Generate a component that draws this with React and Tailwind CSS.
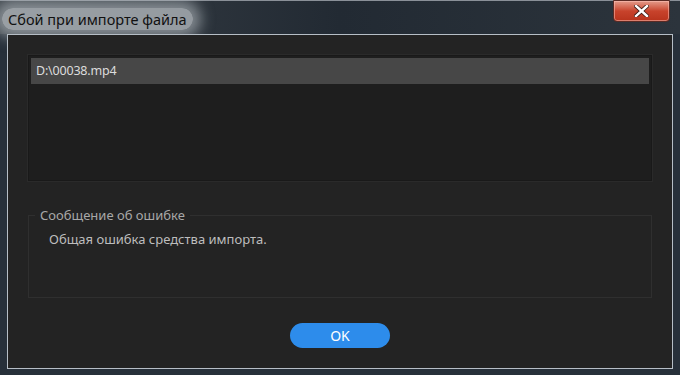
export default function App() {
  const font = { fontFamily: '"Noto Sans", "Open Sans", sans-serif' }
  return (
    <div className="w-[680px] h-[375px] overflow-hidden bg-[#27303a] flex flex-col" style={font}>
      {/* Title bar */}
      <div className="h-[34px] flex items-start justify-between border-t border-[#8a9098] bg-gradient-to-r from-[#3a4148] via-[#222a33] to-[#2c343c]">
        <div className="pl-[8px] pt-[6px]">
          <span className="text-[14.5px] text-[#111] rounded-[16px] bg-[#c2c7cc]/70 px-[6px] -ml-[6px] py-[1px] shadow-[0_0_14px_8px_rgba(190,196,202,0.6)]">
            Сбой при импорте файла
          </span>
        </div>
        <button className="mr-[10px] w-[57px] h-[22px] -mt-px rounded-b-[4px] border border-[#5a2a24] bg-gradient-to-b from-[#e39a8a] via-[#c8432c] to-[#b8331c] flex items-center justify-center shadow-[inset_0_0_0_1px_rgba(255,200,190,0.5)]">
          <svg width="15" height="12" viewBox="0 0 15 12">
            <path d="M2 1 L13 11 M13 1 L2 11" stroke="#3a1a14" strokeWidth="4" strokeLinecap="square" />
            <path d="M2 1 L13 11 M13 1 L2 11" stroke="#ffffff" strokeWidth="2.4" strokeLinecap="square" />
          </svg>
        </button>
      </div>

      {/* Client area */}
      <div className="mx-[7px] h-[335px] border border-[#b6bec6] bg-[#232323] px-[20px] pt-[20px] flex flex-col">
        <div className="h-[126px] border border-[#191919] bg-[#1e1e1e] p-[2px] shadow-[0_0_0_1px_#2a2a2a]">
          <div className="h-[26px] bg-[#474747] flex items-center pl-[5px] text-[12.5px] tracking-[-0.2px] text-[#dcdcdc]">
            D:\00038.mp4
          </div>
        </div>

        <div className="mt-[34px] h-[83px] border border-[#2f2f2f] relative">
          <span className="absolute -top-[10px] left-[6px] px-[5px] bg-[#232323] text-[13px] text-[#a8a8a8]">
            Сообщение об ошибке
          </span>
          <div className="pl-[20px] pt-[14px] text-[13px] text-[#bdbdbd]">
            Общая ошибка средства импорта.
          </div>
        </div>

        <div className="mt-[25px] flex justify-center">
          <button className="w-[100px] h-[25px] rounded-full bg-[#2d8ceb] text-white text-[14px] leading-none">
            OK
          </button>
        </div>
      </div>
      <div className="flex-1" />
    </div>
  )
}
